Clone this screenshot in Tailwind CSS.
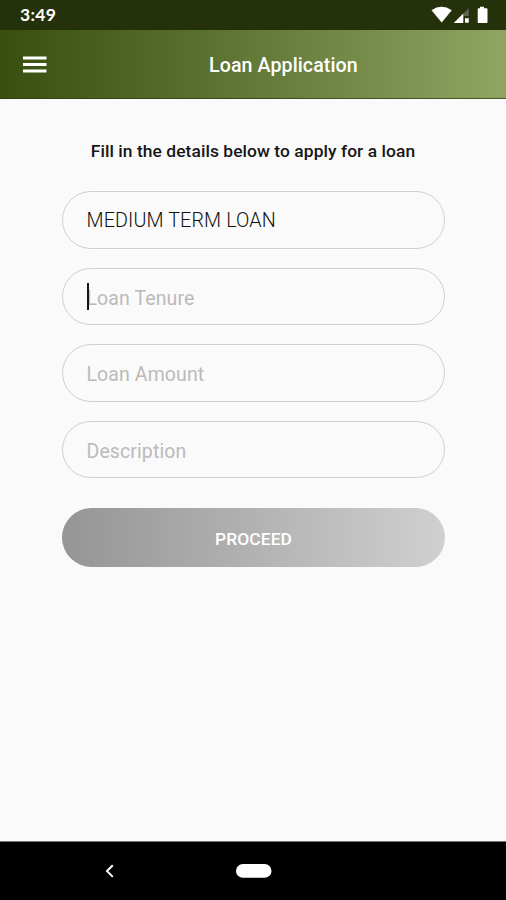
<!DOCTYPE html>
<html lang="en">
<head>
<meta charset="utf-8">
<title>Loan Application</title>
<script src="https://cdn.jsdelivr.net/npm/@tailwindcss/browser@4"></script>
</head>
<body class="flex h-[900px] w-[506px] flex-col overflow-hidden bg-[#fafafa] font-['Roboto',sans-serif]">
<div class="flex h-[30px] shrink-0 items-center justify-between bg-[#24310b] pr-[17px] pl-5">
  <span class="font-['Lato',sans-serif] text-[17.500px] leading-[30px] font-bold tracking-[0.3px] text-white">3:49</span>
  <svg class="h-[30px] w-[58px]" viewBox="431 0 58 30" fill="#fff">
    <path d="M431.5 10.2Q441.5 3.4 451.8 10.2L441.7 22.6Z"/>
    <path d="M468.8 8.2V16h-5.3v-2.500Z" fill="#5d6550"/>
    <path d="M453.7 22.9L463.3 13.400V22.900Z"/>
    <path d="M465 18.200h3.800v4.500H465Z"/>
    <path d="M480 6.700h4v1.500h2.500q1 0 1 1V21.900q0 1.200-1.200 1.200h-7.400q-1.200 0-1.200-1.200V9.200q0-1 1-1H480Z"/>
  </svg>
</div>
<header class="flex h-[69px] shrink-0 items-center border-b border-[#263a08]/70 bg-linear-to-r from-[#384f10] via-[#627937] to-[#91a563] bg-origin-border pl-[23px]">
  <svg class="h-[19px] w-6" viewBox="0 0 24 19" fill="#fff"><path d="M0 1.500h23.500v3H0zM0 8h23.500v3H0zM0 14.500h23.500v3H0z"/></svg>
  <h1 class="ml-[162px] pt-1 text-[19.600px] leading-6 font-medium tracking-[0.1px] whitespace-nowrap text-white">Loan Application</h1>
</header>
<main class="flex grow flex-col px-[61.5px] pt-[40px]">
  <p class="text-center text-[17.400px] leading-6 font-medium tracking-[0.07px] whitespace-nowrap text-[#161616]">Fill in the details below to apply for a loan</p>
  <form class="mt-[28px] flex flex-col gap-[19px] text-[19.500px] tracking-[0.1px]">
    <div class="flex h-[57.500px] items-center rounded-full border border-[#cfcfcf] pt-[3px] pl-6 text-[19.700px] font-light tracking-[0.13px] text-[#111]">MEDIUM TERM LOAN</div>
    <div class="relative flex h-[57.500px] items-center rounded-full border border-[#cfcfcf] pt-1 pl-6 text-[#bababa]">Loan Tenure<span class="absolute top-[14.500px] left-6 h-[27px] w-[2.500px] bg-[#16190c]"></span></div>
    <div class="flex h-[57.500px] items-center rounded-full border border-[#cfcfcf] pt-[3px] pl-6 text-[#bababa]">Loan Amount</div>
    <div class="flex h-[57.500px] items-center rounded-full border border-[#cfcfcf] pt-1 pl-6 text-[#bababa]">Description</div>
    <button type="button" class="mt-[11px] h-[59px] rounded-full bg-linear-to-r from-[#959595] to-[#d0d0d0] pt-1 pl-px text-[17.400px] font-medium text-white">PROCEED</button>
  </form>
</main>
<nav class="h-[59px] shrink-0 border-t border-[#777] bg-black">
  <svg class="h-[58px] w-[506px]" viewBox="0 842 506 58"><path d="M112.800 865.300L107 871.100L112.800 876.900" fill="none" stroke="#fff" stroke-width="2"/><rect x="236" y="864" width="35.500" height="13.800" rx="6.900" fill="#fff"/></svg>
</nav>
</body>
</html>
